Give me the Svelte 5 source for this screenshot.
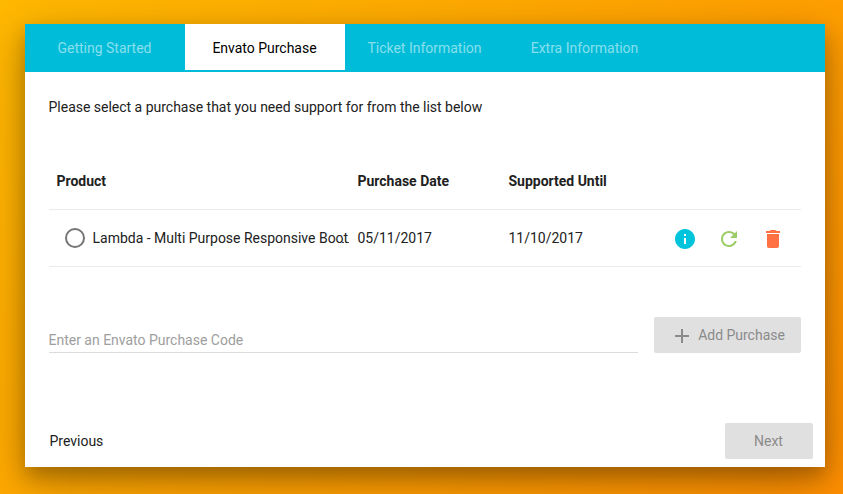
<script>
  const tabs = ['Getting Started', 'Envato Purchase', 'Ticket Information', 'Extra Information'];
  let active = $state(1);
</script>

<main>
  <section class="card">
    <nav>
      {#each tabs as tab, i}
        <button class="tab" class:active={active === i} onclick={() => (active = i)}>{tab}</button>
      {/each}
    </nav>
    <div class="content">
      <p>Please select a purchase that you need support for from the list below</p>
      <div class="table">
        <div class="row head"><span>Product</span><span>Purchase Date</span><span>Supported Until</span></div>
        <div class="row">
          <div class="product"><i class="radio"></i><span class="name">Lambda - Multi Purpose Responsive Boot</span></div>
          <span>05/11/2017</span>
          <span>11/10/2017</span>
          <div class="actions">
            <svg viewBox="0 0 24 24" fill="#00c4dc"><path d="M12 2C6.48 2 2 6.48 2 12s4.48 10 10 10 10-4.48 10-10S17.52 2 12 2zm1 15h-2v-6h2v6zm0-8h-2V7h2v2z" /></svg>
            <svg viewBox="0 0 24 24" fill="#9ccc65"><path d="M17.65 6.35C16.2 4.9 14.21 4 12 4c-4.42 0-7.99 3.58-7.99 8s3.57 8 7.99 8c3.73 0 6.84-2.55 7.73-6h-2.08c-.82 2.33-3.04 4-5.65 4-3.31 0-6-2.69-6-6s2.69-6 6-6c1.66 0 3.14.69 4.22 1.78L13 11h7V4l-2.35 2.35z" /></svg>
            <svg viewBox="0 0 24 24" fill="#ff7043"><path d="M6 19c0 1.1.9 2 2 2h8c1.1 0 2-.9 2-2V7H6v12zM19 4h-3.5l-1-1h-5l-1 1H5v2h14V4z" /></svg>
          </div>
        </div>
      </div>
      <div class="entry">
        <input placeholder="Enter an Envato Purchase Code" />
        <button class="raised add" disabled><svg viewBox="0 0 24 24" fill="#8b8b8b"><path d="M19 13h-6v6h-2v-6H5v-2h6V5h2v6h6v2z" /></svg>Add Purchase</button>
      </div>
    </div>
    <footer>
      <button class="previous">Previous</button>
      <button class="raised next" disabled>Next</button>
    </footer>
  </section>
</main>

<style>
  :global(body) { margin: 0; }
  main {
    box-sizing: border-box;
    width: 843px;
    height: 494px;
    padding: 24px 18px 27px 25px;
    overflow: hidden;
    background: linear-gradient(135deg, #ffb800 0%, #ff8f00 100%);
    font: 14px/20px Roboto, sans-serif;
    letter-spacing: -0.01px;
    color: #212121;
  }
  button, input { font: inherit; letter-spacing: inherit; border: 0; padding: 0; margin: 0; background: none; color: inherit; }
  .card {
    display: flex;
    flex-direction: column;
    height: 443px;
    background: #fff;
    box-shadow: 0 14px 45px rgba(0, 0, 0, 0.25), 0 10px 18px rgba(0, 0, 0, 0.22);
  }
  nav { display: flex; height: 48px; flex: none; background: #00bcd9; }
  .tab { width: 160px; height: 48px; border-bottom: 2px solid transparent; color: rgba(255, 255, 255, 0.54); padding: 2px 1px 0 0; }
  .tab.active { background: #fff; color: #000; border-color: #00bcd9; }
  .content { flex: 1; padding: 25px 24px 0; }
  p { margin: 0 0 36px -0.5px; }
  .row {
    display: grid;
    grid-template-columns: 301px 151px 140.5px 1fr;
    align-items: center;
    height: 56px;
    padding-left: 7.5px;
    border-bottom: 1px solid #ebebeb;
  }
  .head { font-weight: 700; }
  .product { display: flex; align-items: center; gap: 8px; padding-left: 8.5px; }
  .radio { box-sizing: border-box; width: 20px; height: 20px; border: 2px solid #757575; border-radius: 50%; }
  .name { position: relative; white-space: nowrap; margin-left: -0.5px; }
  .name::after { content: ''; position: absolute; right: -1px; bottom: 5px; width: 2px; height: 1px; background: #444; box-shadow: -5px 0 #444; }
  .actions { display: flex; gap: 19.7px; padding: 2px 0 0 24.4px; }
  svg { display: block; width: 24px; height: 24px; flex: none; }
  .entry { display: flex; gap: 16px; align-items: flex-end; margin-top: 50px; }
  input { box-sizing: border-box; flex: 1; height: 26px; padding-top: 1px; border-bottom: 1px solid #dcdcdc; outline: 0; text-indent: -0.5px; }
  input::placeholder { color: #9e9e9e; opacity: 1; }
  .raised { display: flex; align-items: center; justify-content: center; height: 36px; border-radius: 2px; background: #e0e0e0; color: #8b8b8b; }
  .add { width: 147px; gap: 4px; }
  .add svg { margin-top: 2px; }
  .next { width: 88px; padding-right: 1px; box-sizing: border-box; }
  footer { display: flex; align-items: center; justify-content: space-between; padding: 0 12px 8px 24.5px; }
</style>
